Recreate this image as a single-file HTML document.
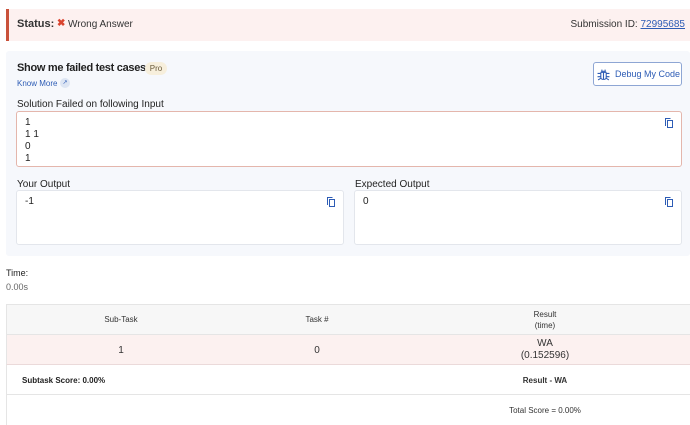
<!DOCTYPE html><html><head><style>
*{box-sizing:border-box;margin:0;padding:0}
body{width:690px;height:422px;overflow:hidden;background:#fff;font-family:"Liberation Sans",sans-serif;color:#222;position:relative}
.a{position:absolute;white-space:nowrap}
.box{position:absolute;background:#fff;border:1px solid #e3e6ec;border-radius:3px;font-size:10px;padding:5px 8px;line-height:12px}
.cp{position:absolute;right:8px;top:6px;width:8px;height:10px}
.t{font-size:8px;color:#333;position:absolute;text-align:center}
</style></head><body>
<div class="a" style="left:6px;top:9px;width:684px;height:32px;background:#fdf1f0;border-left:3px solid #c9513a"></div>
<div class="a" style="left:17px;top:18px;font-size:11px;font-weight:bold;color:#333">Status:</div>
<div class="a" style="left:57px;top:18px;font-size:10px;color:#d9442f;font-weight:bold">✖</div>
<div class="a" style="left:68px;top:19px;font-size:10px;color:#333">Wrong Answer</div>
<div class="a" style="right:5px;top:19px;font-size:10px;color:#333">Submission ID: <span style="color:#2d5cb5;text-decoration:underline">72995685</span></div>

<div class="a" style="left:6px;top:51px;width:684px;height:205px;background:#f6f8fc;border-radius:3px"></div>
<div class="a" style="left:17px;top:62px;font-size:11px;font-weight:bold;color:#222;letter-spacing:-0.3px">Show me failed test cases</div>
<div class="a" style="left:145px;top:62px;width:22px;height:13px;border-radius:7px;background:#f7efdc;font-size:8px;line-height:13px;text-align:center;color:#6a5a3a">Pro</div>
<div class="a" style="left:17px;top:79px;font-size:8px;color:#2d5cb5">Know More</div>
<div class="a" style="left:60px;top:78px;width:10px;height:10px;border-radius:5px;background:#dde5f3;font-size:6px;line-height:10px;text-align:center;color:#2d5cb5">↗</div>
<div class="a" style="left:593px;top:62px;width:89px;height:24px;border:1px solid #8ea6d4;border-radius:3px;background:#fff"></div>
<svg class="a" style="left:597px;top:68px" width="13" height="13" viewBox="0 0 12 12" fill="none" stroke="#2d5cb5" stroke-width="1"><rect x="3.5" y="3" width="5" height="7.5" rx="2"/><path d="M4.5 3 L4.5 1.5 M7.5 3 L7.5 1.5 M6 4 V10.5 M0.5 5 H3.5 M8.5 5 H11.5 M0.5 8 H3.5 M8.5 8 H11.5 M1 11 L3.5 9.5 M11 11 L8.5 9.5 M3.5 4 H8.5"/></svg>
<div class="a" style="left:615px;top:69px;font-size:9px;color:#2d5cb5">Debug My Code</div>
<div class="a" style="left:17px;top:99px;font-size:10px;color:#222">Solution Failed on following Input</div>
<div class="box" style="left:16px;top:111px;width:666px;height:56px;border-color:#e4b6ac">1<br>1 1<br>0<br>1
<svg class="cp" viewBox="0 0 8 10" fill="none" stroke="#2d5cb5" stroke-width="1"><rect x="2.5" y="2.5" width="5" height="7"/><path d="M0.5 8 V0.5 H5.5"/></svg></div>
<div class="a" style="left:17px;top:179px;font-size:10px">Your Output</div>
<div class="a" style="left:355px;top:179px;font-size:10px">Expected Output</div>
<div class="box" style="left:16px;top:190px;width:328px;height:55px">-1<svg class="cp" viewBox="0 0 8 10" fill="none" stroke="#2d5cb5" stroke-width="1"><rect x="2.5" y="2.5" width="5" height="7"/><path d="M0.5 8 V0.5 H5.5"/></svg></div>
<div class="box" style="left:354px;top:190px;width:328px;height:55px">0<svg class="cp" viewBox="0 0 8 10" fill="none" stroke="#2d5cb5" stroke-width="1"><rect x="2.5" y="2.5" width="5" height="7"/><path d="M0.5 8 V0.5 H5.5"/></svg></div>

<div class="a" style="left:6px;top:268px;font-size:9px;color:#222">Time:</div>
<div class="a" style="left:6px;top:282px;font-size:9px;color:#666">0.00s</div>

<div class="a" style="left:6px;top:304px;width:690px;height:31px;background:#f7f7f7;border-top:1px solid #e5e5e5;border-left:1px solid #e5e5e5;border-bottom:1px solid #e5e5e5"></div>
<div class="a" style="left:6px;top:335px;width:690px;height:30px;background:#fcf1f0;border-left:1px solid #e5e5e5;border-bottom:1px solid #ebdada"></div>
<div class="a" style="left:6px;top:365px;width:690px;height:30px;border-left:1px solid #e5e5e5;border-bottom:1px solid #e5e5e5"></div>
<div class="a" style="left:6px;top:395px;width:690px;height:30px;border-left:1px solid #e5e5e5"></div>
<div class="t" style="left:71px;top:315px;width:100px">Sub-Task</div>
<div class="t" style="left:267px;top:315px;width:100px">Task #</div>
<div class="t" style="left:495px;top:309px;width:100px;line-height:11px">Result<br>(time)</div>
<div class="t" style="left:71px;top:345px;width:100px;font-size:10px">1</div>
<div class="t" style="left:267px;top:345px;width:100px;font-size:10px">0</div>
<div class="t" style="left:495px;top:338px;width:100px;font-size:10px;line-height:12px">WA<br>(0.152596)</div>
<div class="a" style="left:22px;top:376px;font-size:8px;font-weight:bold">Subtask Score: 0.00%</div>
<div class="t" style="left:495px;top:376px;width:100px;font-weight:bold">Result - WA</div>
<div class="t" style="left:485px;top:406px;width:120px">Total Score = 0.00%</div>
</body></html>
